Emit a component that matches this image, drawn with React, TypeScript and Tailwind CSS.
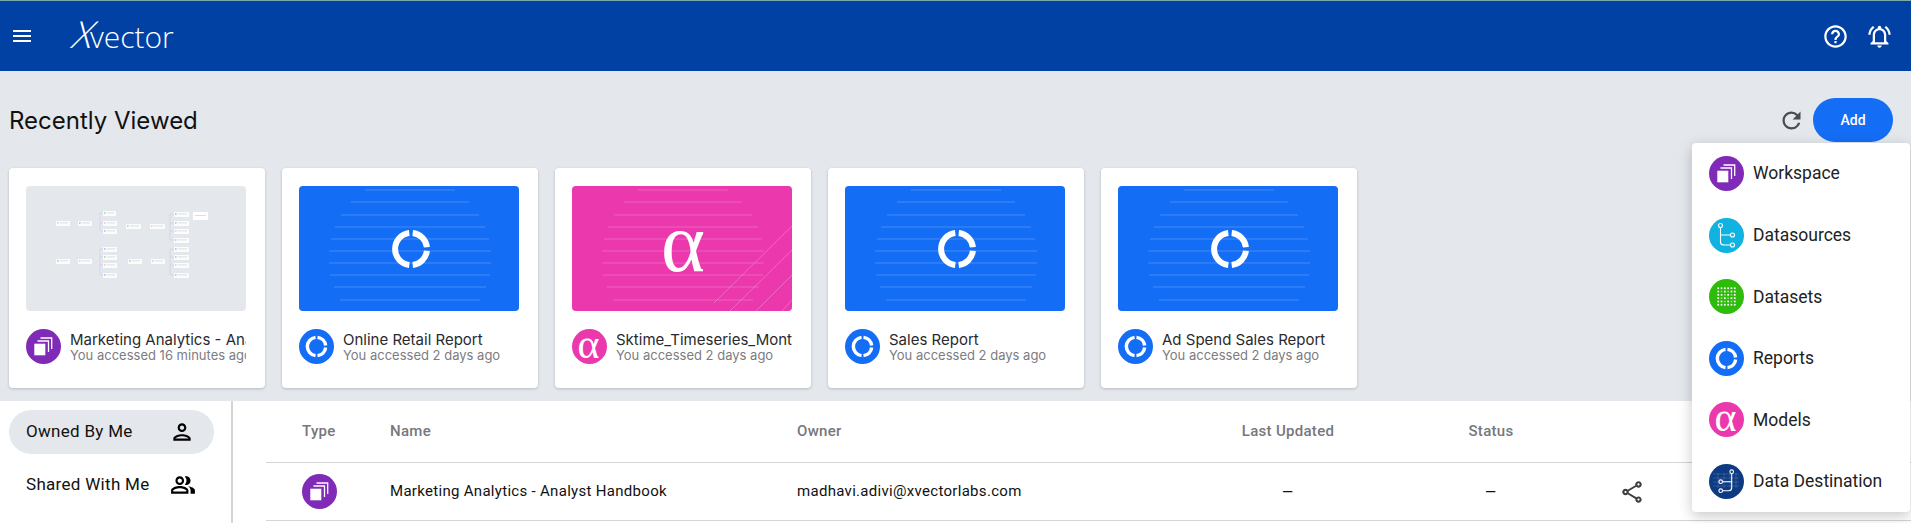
import { ReactNode } from "react";
import {
  MdHelpOutline,
  MdMenu,
  MdOutlineNotificationsActive,
  MdOutlinePeopleAlt,
  MdOutlinePerson,
  MdOutlineShare,
  MdRefresh,
} from "react-icons/md";

const Ring = ({ className }: { className: string }) => (
  <svg viewBox="0 0 40 40" className={className} fill="none" stroke="white" strokeWidth="6">
    <path d="M18.3 35.9A16 16 0 0 1 18.3 4.1" />
    <path d="M21.7 4.1A16 16 0 0 1 35.9 18.3" />
    <path d="M35.9 21.7A16 16 0 0 1 21.7 35.9" />
  </svg>
);

const Alpha = ({ className }: { className: string }) => (
  <span className={`font-['Liberation_Serif',serif] text-white leading-none ${className}`}>α</span>
);

const WorkspaceIcon = () => (
  <svg viewBox="0 0 35 35" className="w-[35px] h-[35px]" fill="none" stroke="white">
    <rect x="8.3" y="14.7" width="11" height="11.6" fill="white" stroke="none" />
    <path d="M11.5 12H22.5V23" strokeWidth="1.3" />
    <path d="M14.5 9H25.7V20" strokeWidth="1.3" />
  </svg>
);

const DatasourceIcon = () => (
  <svg viewBox="0 0 35 35" className="w-[35px] h-[35px]" fill="none" stroke="white" strokeWidth="1.1">
    <circle cx="11.5" cy="7.5" r="2" />
    <circle cx="23.5" cy="17" r="2" />
    <circle cx="23.5" cy="27" r="2" />
    <path d="M11.5 9.5V24Q11.5 27 14.5 27H21.5" />
    <path d="M11.5 17H21.5" />
  </svg>
);

const dotSpots = [0, 1, 2, 3, 4, 5];

const DatasetIcon = () => (
  <svg viewBox="0 0 35 35" className="w-[35px] h-[35px]" fill="white">
    {dotSpots.map((r) =>
      dotSpots.map((c) => (
        <rect
          key={`${r}-${c}`}
          x={8.4 + c * 3.3}
          y={8.4 + r * 3.3}
          width="1.7"
          height="1.7"
          opacity={r > 0 && r < 5 && c > 0 && c < 5 && (r + c) % 2 === 0 ? 0.45 : 1}
        />
      )),
    )}
  </svg>
);

const DestinationIcon = () => (
  <svg viewBox="0 0 35 35" className="w-[35px] h-[35px]" fill="none" stroke="white">
    <path d="M4 10H30M4 14H30M4 18H30M4 22H30M9 9V24M15 9V24M21 9V24M27 9V24" strokeWidth="0.5" opacity="0.28" />
    <g strokeWidth="1.1">
      <circle cx="11.7" cy="17.7" r="1.8" />
      <circle cx="11.7" cy="26.7" r="1.8" />
      <circle cx="22.7" cy="7.7" r="1.8" />
      <path d="M22.7 9.5V23.7Q22.7 26.7 19.7 26.7H13.5M13.5 17.7H22.7" />
    </g>
  </svg>
);

const Circle = ({ bg, children }: { bg: string; children: ReactNode }) => (
  <div className={`w-[35px] h-[35px] rounded-full shrink-0 flex items-center justify-center overflow-hidden ${bg}`}>
    {children}
  </div>
);

const ReportCircle = () => (
  <Circle bg="bg-[#146ef5]">
    <Ring className="w-[23px] h-[23px]" />
  </Circle>
);

const ModelCircle = () => (
  <Circle bg="bg-[#ec38ad]">
    <Alpha className="text-[42px] -mt-[6px] -ml-[2px]" />
  </Circle>
);

const WorkspaceCircle = () => (
  <Circle bg="bg-[#7f2bb8]">
    <WorkspaceIcon />
  </Circle>
);

const lines = [
  [66, 156, 4],
  [52, 170, 16],
  [42, 180, 29],
  [36, 186, 41],
  [32, 190, 53],
  [30, 192, 65],
  [30, 192, 77],
  [31, 191, 89],
  [35, 187, 101],
  [41, 181, 114],
];

const ThumbLines = ({ pink }: { pink?: boolean }) => (
  <svg viewBox="0 0 220 125" className="absolute inset-0 w-full h-full" stroke="white" fill="none">
    {lines.map(([a, b, y]) => (
      <line key={y} x1={a} x2={b} y1={y} y2={y} strokeOpacity="0.2" strokeWidth="1" />
    ))}
    {pink && (
      <g strokeOpacity="0.3" strokeWidth="0.8">
        <line x1="142" y1="117" x2="220" y2="40" />
        <line x1="158" y1="125" x2="220" y2="64" />
        <line x1="184" y1="125" x2="220" y2="89" />
        <line x1="210" y1="125" x2="220" y2="114" />
      </g>
    )}
  </svg>
);

const nodes = [
  [30, 35, 14],
  [52, 35, 14],
  [77, 25, 13],
  [77, 35, 14],
  [77, 43, 14],
  [100, 38, 15],
  [124, 38, 15],
  [148, 26, 15],
  [148, 35, 15],
  [148, 43, 15],
  [148, 52, 15],
  [30, 73, 14],
  [52, 73, 14],
  [77, 61, 14],
  [77, 69, 14],
  [77, 77, 14],
  [77, 87, 14],
  [102, 73, 14],
  [125, 73, 14],
  [148, 61, 15],
  [148, 69, 15],
  [148, 77, 15],
  [148, 87, 15],
];

const FlowThumb = () => (
  <svg viewBox="0 0 220 125" className="w-full h-full">
    <path
      d="M74 27V45M74 27H77M74 37H77M74 45H77M144 28V54M144 28H148M144 37H148M144 45H148M144 54H148M74 63V89M74 63H77M74 71H77M74 79H77M74 89H77M144 63V89M144 63H148M144 71H148M144 79H148M144 89H148"
      stroke="#c9cdec"
      strokeWidth="0.6"
      fill="none"
    />
    {nodes.map(([x, y, w], i) => (
      <g key={i}>
        <rect x={x} y={y} width={w} height="5" fill="white" fillOpacity="0.85" />
        <rect x={x + 1} y={y + 1} width="1.6" height="2" fillOpacity="0.6" fill={i % 3 === 0 ? "#f3a6d8" : i % 3 === 1 ? "#7db0f5" : "#7fd66b"} />
        <rect x={x + 4} y={y + 1.5} width={w - 6} height="0.8" fill="#d4d6da" />
      </g>
    ))}
    <rect x="167" y="26" width="15" height="8" fill="white" />
    <rect x="169" y="29" width="11" height="0.8" fill="#d4d6da" />
  </svg>
);

const BlueThumb = () => (
  <div className="relative h-full bg-[#146ef5] flex items-center justify-center">
    <ThumbLines />
    <Ring className="relative w-[40px] h-[40px] ml-[3px]" />
  </div>
);

const PinkThumb = () => (
  <div className="relative h-full bg-[#ec38ad] flex items-center justify-center">
    <ThumbLines pink />
    <Alpha className="relative text-[84px] -mt-[12px] ml-[2px]" />
  </div>
);

const cards = [
  { thumb: <FlowThumb />, icon: <WorkspaceCircle />, title: "Marketing Analytics - Analyst Handbook", sub: "You accessed 16 minutes ago" },
  { thumb: <BlueThumb />, icon: <ReportCircle />, title: "Online Retail Report", sub: "You accessed 2 days ago" },
  { thumb: <PinkThumb />, icon: <ModelCircle />, title: "Sktime_Timeseries_Monthly", sub: "You accessed 2 days ago" },
  { thumb: <BlueThumb />, icon: <ReportCircle />, title: "Sales Report", sub: "You accessed 2 days ago" },
  { thumb: <BlueThumb />, icon: <ReportCircle />, title: "Ad Spend Sales Report", sub: "You accessed 2 days ago" },
];

const menuItems = [
  { label: "Workspace", icon: <WorkspaceCircle /> },
  { label: "Datasources", icon: <Circle bg="bg-[#0fb2e0]"><DatasourceIcon /></Circle> },
  { label: "Datasets", icon: <Circle bg="bg-[#2fbb0c]"><DatasetIcon /></Circle> },
  { label: "Reports", icon: <ReportCircle /> },
  { label: "Models", icon: <ModelCircle /> },
  { label: "Data Destination", icon: <Circle bg="bg-[#0c3b82]"><DestinationIcon /></Circle> },
];

const rowCols = "grid grid-cols-[88px_407px_383px_216px_190px_92px] items-center";

export default function App() {
  return (
    <div className="relative h-[523px] overflow-hidden bg-[#e4e7ec] font-['Roboto',sans-serif]">
      <header className="h-[71px] bg-[#0041a3] border-t border-[#7fa6a8] flex items-center justify-between pl-[10px] pr-[18px]">
        <div className="flex items-center">
          <MdMenu className="text-white w-[24px] h-[24px]" />
          <div className="ml-[41px] -mt-[5px] flex items-baseline text-white font-['Open_Sans',sans-serif] font-light text-[30px] leading-none">
            <span className="inline-block -skew-x-[20deg] text-[37px]">X</span>
            <span className="-ml-[5px]">vector</span>
          </div>
        </div>
        <div className="flex items-center gap-[17px] text-white">
          <MdHelpOutline className="w-[27px] h-[27px]" />
          <MdOutlineNotificationsActive className="w-[27px] h-[27px]" />
        </div>
      </header>

      <div className="flex items-center justify-between pl-[9px] pr-[18px] pt-[27px] pb-[26px]">
        <h1 className="font-['Inter',sans-serif] text-[24px] leading-none text-[#111] mt-[2px]">Recently Viewed</h1>
        <div className="flex items-center gap-[8px]">
          <MdRefresh className="w-[27px] h-[27px] text-[#4b4b50]" />
          <button className="w-[80px] h-[44px] rounded-full bg-[#146ef5] text-white text-[14px] font-medium">Add</button>
        </div>
      </div>

      <div className="flex gap-[17px] pl-[9px]">
        {cards.map((c, i) => (
          <div key={i} className="w-[256px] h-[220px] bg-white rounded-[4px] shadow-[0_1px_3px_rgba(0,0,0,0.2)] pt-[18px] pl-[17px] pr-[19px]">
            <div className="h-[125px] rounded-[4px] overflow-hidden bg-[#e4e7ec]">{c.thumb}</div>
            <div className="mt-[18px] flex items-center gap-[9px] min-w-0">
              {c.icon}
              <div className="min-w-0 overflow-hidden whitespace-nowrap font-['Inter',sans-serif]">
                <p className="text-[15px] leading-[17px] text-[#2a2a2e]">{c.title}</p>
                <p className="text-[13px] leading-[15px] text-[#7c7c82]">{c.sub}</p>
              </div>
            </div>
          </div>
        ))}
      </div>

      <div className="mt-[13px] h-[122px] bg-white flex">
        <aside className="w-[233px] shrink-0 border-r-2 border-[#d4d4d6] pt-[9px] pl-[9px] pr-[17px]">
          <div className="h-[44px] rounded-full bg-[#e4e7ec] flex items-center justify-between pl-[17px] pr-[19px] text-[17px] tracking-[0.3px] text-[#111]">
            Owned By Me
            <MdOutlinePerson className="w-[26px] h-[26px] text-black" />
          </div>
          <div className="h-[44px] mt-[9px] flex items-center justify-between pl-[17px] pr-[18px] text-[17px] tracking-[0.3px] text-[#111]">
            Shared With Me
            <MdOutlinePeopleAlt className="w-[26px] h-[26px] text-black" />
          </div>
        </aside>
        <div className="ml-[33px] flex-1">
          <div className={`${rowCols} h-[62px] border-b border-[#d4d4d6] pl-[36px] pr-[10px] text-[15px] font-medium text-[#77777c] tracking-[0.3px]`}>
            <span>Type</span>
            <span>Name</span>
            <span>Owner</span>
            <span className="text-center">Last Updated</span>
            <span className="text-center">Status</span>
            <span />
          </div>
          <div className={`${rowCols} h-[58px] border-b border-[#d4d4d6] pl-[36px] pr-[10px] text-[15px] text-[#111] tracking-[0.3px]`}>
            <WorkspaceCircle />
            <span>Marketing Analytics - Analyst Handbook</span>
            <span>madhavi.adivi@xvectorlabs.com</span>
            <span className="text-center text-[19px] leading-none">–</span>
            <span className="text-center text-[19px] leading-none">–</span>
            <MdOutlineShare className="justify-self-center w-[26px] h-[26px] text-[#3d3d42]" />
          </div>
        </div>
      </div>

      <div className="absolute left-[1692px] top-[143px] w-[218px] h-[369px] bg-white rounded-[4px] shadow-[0_4px_14px_rgba(0,0,0,0.22)] pt-[13px] pl-[17px]">
        {menuItems.map((m) => (
          <div key={m.label} className="h-[61.6px] flex items-start gap-[9px]">
            {m.icon}
            <span className="h-[35px] flex items-center text-[17.5px] text-[#222]">{m.label}</span>
          </div>
        ))}
      </div>
    </div>
  );
}
